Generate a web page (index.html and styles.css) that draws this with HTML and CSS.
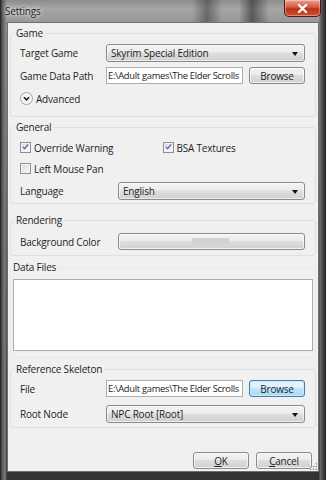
FILE: index.html
```html
<!DOCTYPE html>
<html lang="en">
<head>
  <meta charset="UTF-8">
  <title>Settings</title>
  <link rel="stylesheet" href="styles.css">
</head>
<body>
  <div class="window">
    <div class="titlebar">
      <span class="title">Settings</span>
      <button class="close" title="Close">
        <svg width="11" height="9" viewBox="0 0 11 9"><path d="M2 1 L9 8 M9 1 L2 8" stroke="#fff" stroke-width="2.2" stroke-linecap="square"/></svg>
      </button>
    </div>

    <div class="client">
      <div class="group game">
        <span class="caption">Game</span>
        <div class="row">
          <span class="lbl">Target Game</span>
          <div class="combo">Skyrim Special Edition<span class="arrow"></span></div>
        </div>
        <div class="row">
          <span class="lbl">Game Data Path</span>
          <div class="edit"><span>E:\Adult games\The Elder Scrolls</span></div>
          <button class="btn">Browse</button>
        </div>
        <div class="row adv">
          <svg width="13" height="13" viewBox="0 0 13 13"><circle cx="6.5" cy="6.5" r="6" fill="#f6f6f6" stroke="#a3a3a3"/><path d="M3.9 5.3 L6.5 7.9 L9.1 5.3" fill="none" stroke="#1a1a1a" stroke-width="1.5"/></svg>
          <span>Advanced</span>
        </div>
      </div>

      <div class="group general">
        <span class="caption">General</span>
        <div class="row checks">
          <label class="check"><span class="box on"></span>Override Warning</label>
          <label class="check"><span class="box on"></span>BSA Textures</label>
        </div>
        <div class="row checks">
          <label class="check"><span class="box"></span>Left Mouse Pan</label>
        </div>
        <div class="row">
          <span class="lbl wide">Language</span>
          <div class="combo">English<span class="arrow"></span></div>
        </div>
      </div>

      <div class="group rendering">
        <span class="caption">Rendering</span>
        <div class="row">
          <span class="lbl wide">Background Color</span>
          <button class="btn color"><span class="swatch"></span></button>
        </div>
      </div>

      <div class="group files">
        <span class="caption">Data Files</span>
        <div class="list"></div>
      </div>

      <div class="group skeleton">
        <span class="caption">Reference Skeleton</span>
        <div class="row tall">
          <span class="lbl">File</span>
          <div class="edit"><span>E:\Adult games\The Elder Scrolls</span></div>
          <button class="btn focus">Browse</button>
        </div>
        <div class="row tall">
          <span class="lbl">Root Node</span>
          <div class="combo">NPC Root [Root]<span class="arrow"></span></div>
        </div>
      </div>

      <div class="actions">
        <button class="btn action"><u>O</u>K</button>
        <button class="btn action"><u>C</u>ancel</button>
      </div>
      <span class="grip"></span>
    </div>
  </div>
</body>
</html>
```

FILE: styles.css
```css
html, body {
  margin: 0;
  width: 326px;
  height: 480px;
  overflow: hidden;
  background: #2a2a2a;
}
body {
  font-family: "Open Sans", "Noto Sans", sans-serif;
  font-size: 10px;
  letter-spacing: -0.2px;
  color: #1e1e1e;
}
.window {
  width: 326px;
  height: 480px;
  box-sizing: border-box;
  padding: 0 7px 8px 7px;
  display: flex;
  flex-direction: column;
  background:
    linear-gradient(90deg, #1a1a1a 0, #555 2px, #7c7c7c 5px, transparent 7px, transparent 319px, #6a6a6a 320px, #222 326px),
    linear-gradient(180deg, #8c8c8c 0, #a6a6a6 9px, #979797 22px, #4f4f4f 55%, #333 100%);
}
.titlebar {
  height: 22px;
  flex-shrink: 0;
  position: relative;
  display: flex;
  align-items: center;
  background:
    linear-gradient(90deg, transparent 0, transparent 185px, rgba(50,50,50,0.5) 200px, transparent 215px, transparent 232px, rgba(30,30,30,0.55) 245px, transparent 262px);
}
.title {
  margin: 0 0 1px -2px;
  font-size: 10px;
  color: #1a1a1a;
  text-shadow: 0 0 6px rgba(255,255,255,0.9), 0 0 3px rgba(255,255,255,0.8);
}
.close {
  position: absolute;
  top: 0;
  right: -2px;
  width: 37px;
  height: 17px;
  padding: 0;
  border: 1px solid #4e1a12;
  border-top: none;
  border-radius: 0 0 5px 5px;
  background: linear-gradient(180deg, #e9a38f 0, #d4583c 45%, #b9321a 55%, #d44e2d 100%);
  box-shadow: inset 0 0 0 1px rgba(255,255,255,0.35);
  display: flex;
  align-items: center;
  justify-content: center;
}
.client {
  flex: 1;
  position: relative;
  background: #f0f0f0;
  border: 1px solid #6c7076;
  padding: 10px 2px 0 2px;
  display: flex;
  flex-direction: column;
}
.group {
  position: relative;
  flex-shrink: 0;
  border: 1px solid #dcdfe3;
  border-radius: 3px;
  padding: 7px 10px 6px 9px;
  display: flex;
  flex-direction: column;
}
.caption {
  position: absolute;
  top: -8px;
  left: 3px;
  padding: 0 2px;
  background: #f0f0f0;
  line-height: 14px;
}
.general { margin-top: 10px; padding-top: 9px; padding-bottom: 1px; }
.rendering { margin-top: 16px; padding-top: 9px; padding-bottom: 2px; }
.files {
  margin-top: 11px;
  padding: 11px 2px 6px 2px;
  border-color: #e6e8ea;
}
.files .caption { left: 0; }
.skeleton { margin-top: 11px; padding-top: 6px; padding-bottom: 1px; }
.row {
  display: flex;
  align-items: center;
  height: 23px;
  flex-shrink: 0;
}
.row.tall { height: 25px; }
.lbl {
  width: 86px;
  flex-shrink: 0;
  white-space: nowrap;
}
.lbl.wide { width: 98px; }
.combo {
  flex: 1;
  height: 18px;
  box-sizing: border-box;
  border: 1px solid #8a8a8a;
  border-radius: 3px;
  background: linear-gradient(180deg, #f3f3f3 0, #ececec 45%, #dedede 50%, #d0d0d0 100%);
  box-shadow: inset 0 0 0 1px rgba(255,255,255,0.6);
  padding: 0 4px;
  display: flex;
  align-items: center;
  position: relative;
}
.arrow {
  position: absolute;
  right: 6px;
  top: 7px;
  border-left: 3.5px solid transparent;
  border-right: 3.5px solid transparent;
  border-top: 4px solid #111;
}
.edit {
  width: 137px;
  height: 17px;
  box-sizing: border-box;
  border: 1px solid #abadb3;
  background: #fff;
  padding: 0 1px;
  display: flex;
  align-items: center;
  white-space: nowrap;
  overflow: hidden;
  flex-shrink: 0;
  font-size: 9.4px;
  letter-spacing: -0.3px;
}
.btn {
  font: inherit;
  letter-spacing: inherit;
  color: #1e1e1e;
  height: 17px;
  box-sizing: border-box;
  padding: 0;
  border: 1px solid #8a8a8a;
  border-radius: 3px;
  background: linear-gradient(180deg, #f3f3f3 0, #ececec 45%, #dedede 50%, #d0d0d0 100%);
  box-shadow: inset 0 0 0 1px rgba(255,255,255,0.7);
}
.row .btn {
  width: 56px;
  margin-left: auto;
}
.btn.focus {
  border-color: #3c7fb1;
  box-shadow: inset 0 0 0 1px #cfe8f7;
  background: linear-gradient(180deg, #eaf6fd 0, #d9f0fc 45%, #bee6fd 50%, #a7d9f5 100%);
}
.adv { gap: 3px; }
.checks { height: 21px; }
.check {
  display: flex;
  align-items: center;
  gap: 3px;
  width: 146px;
}
.box {
  width: 9px;
  height: 9px;
  border: 1px solid #8e8f8f;
  background: linear-gradient(135deg, #d8d8d8, #fbfbfb);
  box-shadow: inset 0 0 0 1px #f2f2f2;
  position: relative;
}
.box.on::after {
  content: "";
  position: absolute;
  left: 3px;
  top: 0;
  width: 2px;
  height: 5px;
  border-right: 1.5px solid #3a4f9a;
  border-bottom: 1.5px solid #3a4f9a;
  transform: rotate(40deg);
}
.btn.color {
  flex: 1;
  width: auto;
  display: flex;
  justify-content: center;
  align-items: flex-start;
  padding-top: 4px;
}
.swatch {
  display: block;
  width: 37px;
  height: 7px;
  background: #d2d2d2;
  margin-left: -3px;
}
.list {
  height: 72px;
  box-sizing: border-box;
  border: 1px solid #abadb3;
  background: #fff;
}
.actions {
  margin-top: auto;
  display: flex;
  justify-content: flex-end;
  gap: 7px;
  padding: 0 4px 2px 0;
}
.btn.action {
  width: 56px;
  height: 17px;
}
.grip {
  position: absolute;
  right: 1px;
  bottom: 1px;
  width: 8px;
  height: 8px;
  background: radial-gradient(circle, #a0a0a0 45%, transparent 50%) 0 0 / 3px 3px;
  clip-path: polygon(100% 0, 100% 100%, 0 100%);
}
```
